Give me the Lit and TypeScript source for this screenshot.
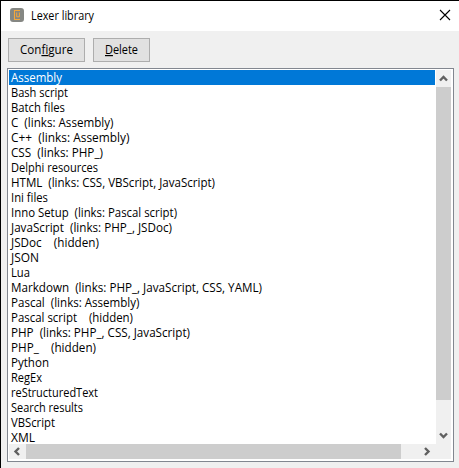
import { LitElement, html, css, svg } from "lit";
import { customElement } from "lit/decorators.js";
import { classMap } from "lit/directives/class-map.js";

// Lexer label and its drawn width in pixels
const LEXERS: [string, number][] = [
  ["Assembly", 51],
  ["Bash script", 57],
  ["Batch files", 54],
  ["C  (links: Assembly)", 102.5],
  ["C++  (links: Assembly)", 118.5],
  ["CSS  (links: PHP_)", 92],
  ["Delphi resources", 87],
  ["HTML  (links: CSS, VBScript, JavaScript)", 204],
  ["Ini files", 37],
  ["Inno Setup  (links: Pascal script)", 166],
  ["JavaScript  (links: PHP_, JSDoc)", 161],
  ["JSDoc    (hidden)", 88],
  ["JSON", 28],
  ["Lua", 19],
  ["Markdown  (links: PHP_, JavaScript, CSS, YAML)", 251],
  ["Pascal  (links: Assembly)", 128.5],
  ["Pascal script    (hidden)", 122],
  ["PHP  (links: PHP_, CSS, JavaScript)", 179],
  ["PHP_    (hidden)", 85],
  ["Python", 38],
  ["RegEx", 31],
  ["reStructuredText", 87],
  ["Search results", 72],
  ["VBScript", 44],
  ["XML", 24],
];

const arrow = (points: string) => html`
  <svg width="15" height="15" viewBox="0 0 15 15">
    ${svg`<polyline points=${points} fill="none" stroke="#606060" stroke-width="2.4"></polyline>`}
  </svg>`;

@customElement("app-root")
export class AppRoot extends LitElement {
  static styles = css`
    :host {
      display: flex;
      flex-direction: column;
      box-sizing: border-box;
      width: 459px;
      height: 468px;
      border-top: 1px solid #000;
      border-left: 1px solid #000;
      background: #f0f0f0;
      color: #000;
      font: 12px/15px "Open Sans", "Noto Sans", sans-serif;
      overflow: hidden;
    }
    svg { display: block; flex: none; }
    .title {
      display: flex;
      align-items: center;
      box-sizing: border-box;
      height: 30px;
      flex: none;
      padding: 0 8px 1px 9px;
      background: #fff;
    }
    .icon { margin-bottom: 1px; }
    .caption { flex: 1; margin-left: 7px; }
    .tools { display: flex; gap: 8px; padding: 7px 7px 6px; flex: none; }
    .btn {
      box-sizing: border-box;
      height: 24px;
      border: 1px solid #adadad;
      background: #e1e1e1;
      display: flex;
      align-items: center;
      justify-content: center;
    }
    .configure { width: 77px; }
    .delete { width: 57px; }
    .list {
      box-sizing: border-box;
      width: 447px;
      height: 394px;
      margin-left: 6px;
      border: 1px solid #828790;
      background: #fff;
      padding: 1px;
      display: grid;
      grid-template-columns: 426px 15px;
      grid-template-rows: 374px 15px;
      column-gap: 1px;
    }
    .rows { overflow: hidden; }
    .row { height: 15px; padding-left: 2px; }
    .row.selected { background: #0078d7; color: #fff; }
    .text { overflow: visible; }
    .vbar, .hbar { background: #f0f0f0; display: flex; justify-content: space-between; }
    .vbar { flex-direction: column; }
    .hbar { grid-column: 1 / 3; }
    .vthumb { height: 313px; margin: 2px 0 29px; background: #cdcdcd; }
    .hthumb { width: 375px; margin: 0 18px 0 2px; background: #cdcdcd; }
    .hbar svg:last-child { margin-right: 17px; }
  `;

  private label(text: string, width: number) {
    return svg`<text x="0" y="12" fill="currentColor" textLength=${width} lengthAdjust="spacingAndGlyphs" xml:space="preserve" style="white-space:pre">${text}</text>`;
  }

  render() {
    return html`
      <div class="title">
        <svg class="icon" width="14" height="14" viewBox="0 0 14 14">
          <rect width="14" height="14" rx="3" fill="#858783"></rect>
          <path d="M10 2.5H4.5V11.5H10" fill="none" stroke="#f5a73b" stroke-width="1.1"></path>
          <path d="M6.7 4.5V8.8H9.4V4.5" fill="none" stroke="#f5a73b" stroke-width="1"></path>
        </svg>
        <svg class="caption text" height="15">${this.label("Lexer library", 63)}</svg>
        <svg class="icon" width="12" height="12" viewBox="0 0 12 12">
          <path d="M1 1L11 11M11 1L1 11" stroke="#000" stroke-width="1.1"></path>
        </svg>
      </div>
      <div class="tools">
        <div class="btn configure">
          <svg class="text" width="53" height="16"><text x="0" y="12" textLength="53" lengthAdjust="spacingAndGlyphs">Con<tspan text-decoration="underline">f</tspan>igure</text></svg>
        </div>
        <div class="btn delete">
          <svg class="text" width="33" height="16"><text x="0" y="12" textLength="33" lengthAdjust="spacingAndGlyphs"><tspan text-decoration="underline">D</tspan>elete</text></svg>
        </div>
      </div>
      <div class="list">
        <div class="rows">
          ${LEXERS.map(([text, width], i) => html`
            <div class=${classMap({ row: true, selected: i === 0 })}>
              <svg class="text" width="420" height="15">${this.label(text, width)}</svg>
            </div>`)}
        </div>
        <div class="vbar">
          ${arrow("4,10.5 7.5,7 11,10.5")}
          <div class="vthumb"></div>
          ${arrow("4,4.5 7.5,8 11,4.5")}
        </div>
        <div class="hbar">
          ${arrow("10,4 6.5,7.5 10,11")}
          <div class="hthumb"></div>
          ${arrow("6,4 9.5,7.5 6,11")}
        </div>
      </div>
    `;
  }
}
